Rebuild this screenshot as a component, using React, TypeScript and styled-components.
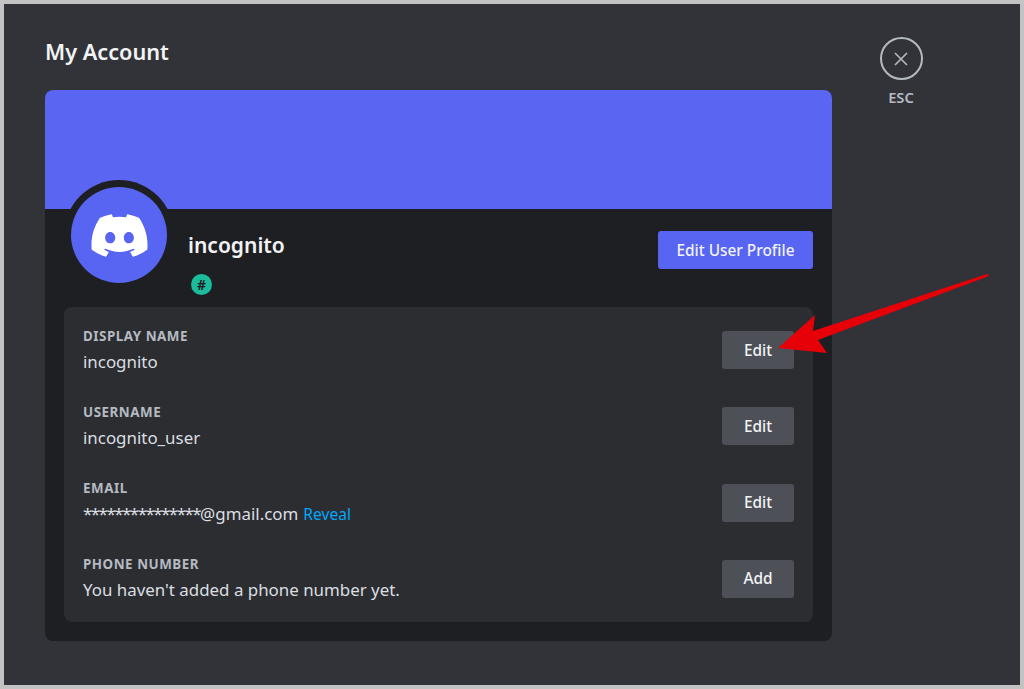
import React from 'react';
import styled, { createGlobalStyle } from 'styled-components';
import { FaDiscord } from 'react-icons/fa';

const GlobalStyle = createGlobalStyle`
  html, body {
    margin: 0;
    padding: 0;
    background: #313338;
  }
  * {
    box-sizing: border-box;
  }
`;

const Frame = styled.div`
  position: relative;
  width: 1024px;
  height: 689px;
  border: 4px solid #c3c3c3;
  background: #313338;
  font-family: 'Noto Sans', 'Open Sans', sans-serif;
  display: flex;
  align-items: flex-start;
  overflow: hidden;
`;

const Main = styled.div`
  width: 787px;
  margin-left: 41px;
  padding-top: 33px;
`;

const PageTitle = styled.h1`
  margin: 0 0 24px;
  height: 29px;
  line-height: 29px;
  font-size: 21.7px;
  font-weight: 600;
  color: #f2f3f5;
`;

const Card = styled.div`
  height: 551px;
  border-radius: 8px;
  background: #1e1f22;
  overflow: hidden;
`;

const Banner = styled.div`
  height: 119px;
  background: #5a65f2;
`;

const ProfileRow = styled.div`
  height: 98px;
  padding: 0 19px;
  display: flex;
  align-items: flex-start;
`;

const AvatarRing = styled.div`
  width: 110px;
  height: 110px;
  margin-top: -29px;
  flex-shrink: 0;
  border-radius: 50%;
  background: #1e1f22;
  display: flex;
  align-items: center;
  justify-content: center;
`;

const Avatar = styled.div`
  width: 96px;
  height: 96px;
  border-radius: 50%;
  background: #5865f2;
  color: #fff;
  display: flex;
  align-items: center;
  justify-content: center;
  font-size: 61px;
`;

const ProfileInfo = styled.div`
  margin-left: 14px;
  padding-top: 22px;
  flex: 1;
`;

const ProfileName = styled.div`
  height: 28px;
  line-height: 28px;
  font-size: 21px;
  font-weight: 600;
  color: #f2f3f5;
`;

const Badge = styled.div`
  width: 21px;
  height: 21px;
  margin: 15px 0 0 3px;
  border-radius: 50%;
  background: #1abc9c;
  color: #1e1f22;
  display: flex;
  align-items: center;
  justify-content: center;
  font-size: 14px;
  font-weight: 700;
`;

const Button = styled.button<{ $primary?: boolean }>`
  height: 38px;
  padding: 0;
  border: 0;
  border-radius: 3px;
  font-family: inherit;
  font-size: 15.4px;
  font-weight: 500;
  color: #f2f3f5;
  width: ${p => (p.$primary ? '155px' : '72px')};
  background: ${p => (p.$primary ? '#5865f2' : '#4e5058')};
  flex-shrink: 0;
`;

const PrimaryButton = styled(Button)`
  margin-top: 22px;
`;

const FieldPanel = styled.div`
  height: 315px;
  margin: 0 19px;
  padding: 24px 19px;
  border-radius: 8px;
  background: #2b2d31;
  display: flex;
  flex-direction: column;
  justify-content: space-between;
`;

const FieldRow = styled.div`
  height: 38px;
  display: flex;
  align-items: center;
  justify-content: space-between;
`;

const FieldText = styled.div`
  display: flex;
  flex-direction: column;
  gap: 5px;
`;

const FieldLabel = styled.div`
  height: 18px;
  line-height: 18px;
  font-size: 13.4px;
  font-weight: 700;
  letter-spacing: 0.52px;
  color: #b5bac1;
`;

const FieldValue = styled.div`
  height: 24px;
  line-height: 24px;
  font-size: 16.9px;
  color: #dbdee1;
`;

const MaskedStars = styled.span`
  letter-spacing: -1.5px;
`;

const RevealLink = styled.span`
  margin-left: 5px;
  font-size: 15.6px;
  color: #00a8fc;
`;

const CloseArea = styled.div`
  margin: 33px 0 0 48px;
  width: 42px;
  display: flex;
  flex-direction: column;
  align-items: center;
  color: #b5bac1;
`;

const CloseCircle = styled.div`
  width: 43px;
  height: 43px;
  border: 2px solid #b5bac1;
  border-radius: 50%;
  display: flex;
  align-items: center;
  justify-content: center;
  flex-shrink: 0;
`;

const CloseLabel = styled.div`
  margin-top: 7px;
  height: 20px;
  line-height: 20px;
  font-size: 14.7px;
  font-weight: 600;
`;

const Arrow = styled.svg`
  position: absolute;
  left: -4px;
  top: -4px;
  pointer-events: none;
`;

const fields = [
  { label: 'DISPLAY NAME', value: 'incognito', action: 'Edit' },
  { label: 'USERNAME', value: 'incognito_user', action: 'Edit' },
  { label: 'EMAIL', stars: '***************', value: '@gmail.com', action: 'Edit', reveal: true },
  { label: 'PHONE NUMBER', value: "You haven't added a phone number yet.", action: 'Add' },
];

export default function App() {
  return (
    <Frame>
      <GlobalStyle />
      <Main>
        <PageTitle>My Account</PageTitle>
        <Card>
          <Banner />
          <ProfileRow>
            <AvatarRing>
              <Avatar>
                <FaDiscord />
              </Avatar>
            </AvatarRing>
            <ProfileInfo>
              <ProfileName>incognito</ProfileName>
              <Badge>#</Badge>
            </ProfileInfo>
            <PrimaryButton $primary>Edit User Profile</PrimaryButton>
          </ProfileRow>
          <FieldPanel>
            {fields.map(f => (
              <FieldRow key={f.label}>
                <FieldText>
                  <FieldLabel>{f.label}</FieldLabel>
                  <FieldValue>
                    {f.stars && <MaskedStars>{f.stars}</MaskedStars>}
                    {f.value}
                    {f.reveal && <RevealLink>Reveal</RevealLink>}
                  </FieldValue>
                </FieldText>
                <Button>{f.action}</Button>
              </FieldRow>
            ))}
          </FieldPanel>
        </Card>
      </Main>
      <CloseArea>
        <CloseCircle>
          <svg width="18" height="18" viewBox="0 0 18 18" fill="none">
            <path d="M3 3 L15 15 M15 3 L3 15" stroke="#b5bac1" strokeWidth="1.6" />
          </svg>
        </CloseCircle>
        <CloseLabel>ESC</CloseLabel>
      </CloseArea>
      <Arrow width="1024" height="689" viewBox="0 0 1024 689">
        <path d="M778 348 L815 315 L813 331 L987 274 L989 276 L818 340 L827 353 Z" fill="#e60008" />
      </Arrow>
    </Frame>
  );
}
